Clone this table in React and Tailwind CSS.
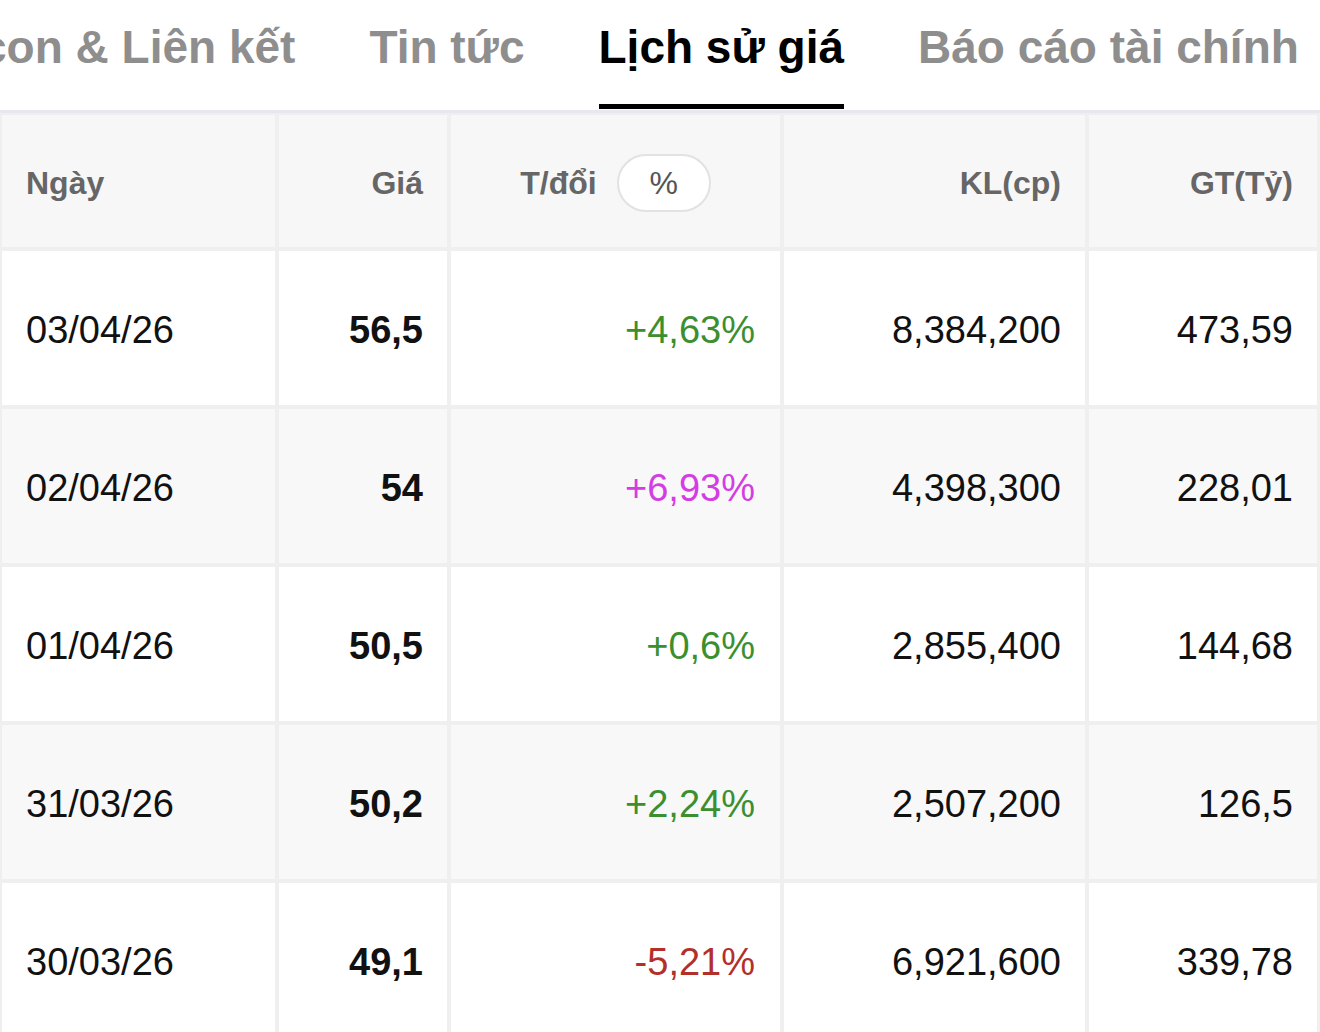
import React from "react";

const rows = [
  { d: "03/04/26", p: "56,5", c: "+4,63%", cc: "text-[#3b8f2e]", kl: "8,384,200", gt: "473,59" },
  { d: "02/04/26", p: "54", c: "+6,93%", cc: "text-[#d33de3]", kl: "4,398,300", gt: "228,01" },
  { d: "01/04/26", p: "50,5", c: "+0,6%", cc: "text-[#3b8f2e]", kl: "2,855,400", gt: "144,68" },
  { d: "31/03/26", p: "50,2", c: "+2,24%", cc: "text-[#3b8f2e]", kl: "2,507,200", gt: "126,5" },
  { d: "30/03/26", p: "49,1", c: "-5,21%", cc: "text-[#b3302a]", kl: "6,921,600", gt: "339,78" },
];

const tabs = ["Công ty con & Liên kết", "Tin tức", "Lịch sử giá", "Báo cáo tài chính"];

export default function App() {
  return (
    <div className="w-[1320px] h-[1032px] overflow-hidden bg-white" style={{ fontFamily: '"Liberation Sans", Arial, sans-serif' }}>
      <div className="h-[110px] overflow-hidden">
        <div className="flex h-full gap-[74px] ml-[-203px] whitespace-nowrap">
          {tabs.map((t, i) => {
            const active = i === 2;
            return (
              <div key={t} className="relative h-full shrink-0">
                <div className={`pt-[24px] text-[46px] leading-[46px] font-bold ${active ? "text-black" : "text-[#8e8e8e]"}`}>{t}</div>
                {active && <div className="absolute left-0 right-0 bottom-[1px] h-[5px] bg-black" />}
              </div>
            );
          })}
        </div>
      </div>
      <div className="h-[3px] bg-[#e7e7ef]" />
      <div className="grid grid-cols-[273px_168px_329px_301px_228px] gap-[4px] bg-[#efefef] pl-[2px] pr-[3px] pt-[2px]">
        <div className="h-[132px] bg-[#f7f7f7] flex items-center pt-[4px] pl-[24px] text-[32px] font-bold text-[#666]">Ngày</div>
        <div className="h-[132px] bg-[#f7f7f7] flex items-center pt-[4px] justify-end pr-[24px] text-[32px] font-bold text-[#666]">Giá</div>
        <div className="h-[132px] bg-[#f7f7f7] flex items-center pt-[4px] justify-center gap-[20px] text-[32px] font-bold text-[#666]">
          <span>T/đổi</span>
          <span className="w-[94px] h-[58px] rounded-full border-2 border-[#e2e2e2] bg-white flex items-center justify-center font-normal text-[32px] text-[#555]">%</span>
        </div>
        <div className="h-[132px] bg-[#f7f7f7] flex items-center pt-[4px] justify-end pr-[24px] text-[32px] font-bold text-[#666]">KL(cp)</div>
        <div className="h-[132px] bg-[#f7f7f7] flex items-center pt-[4px] justify-end pr-[24px] text-[32px] font-bold text-[#666]">GT(Tỷ)</div>
        {rows.map((r, i) => {
          const bg = i % 2 === 1 ? "bg-[#f8f8f8]" : "bg-white";
          return (
            <React.Fragment key={r.d}>
              <div className={`h-[154px] ${bg} flex items-center pt-[4px] pl-[24px] text-[38px] text-[#111]`}>{r.d}</div>
              <div className={`h-[154px] ${bg} flex items-center pt-[4px] justify-end pr-[24px] text-[38px] font-bold text-[#111]`}>{r.p}</div>
              <div className={`h-[154px] ${bg} flex items-center pt-[4px] justify-end pr-[25px] text-[38px] ${r.cc}`}>{r.c}</div>
              <div className={`h-[154px] ${bg} flex items-center pt-[4px] justify-end pr-[24px] text-[38px] text-[#111]`}>{r.kl}</div>
              <div className={`h-[154px] ${bg} flex items-center pt-[4px] justify-end pr-[24px] text-[38px] text-[#111]`}>{r.gt}</div>
            </React.Fragment>
          );
        })}
      </div>
    </div>
  );
}
